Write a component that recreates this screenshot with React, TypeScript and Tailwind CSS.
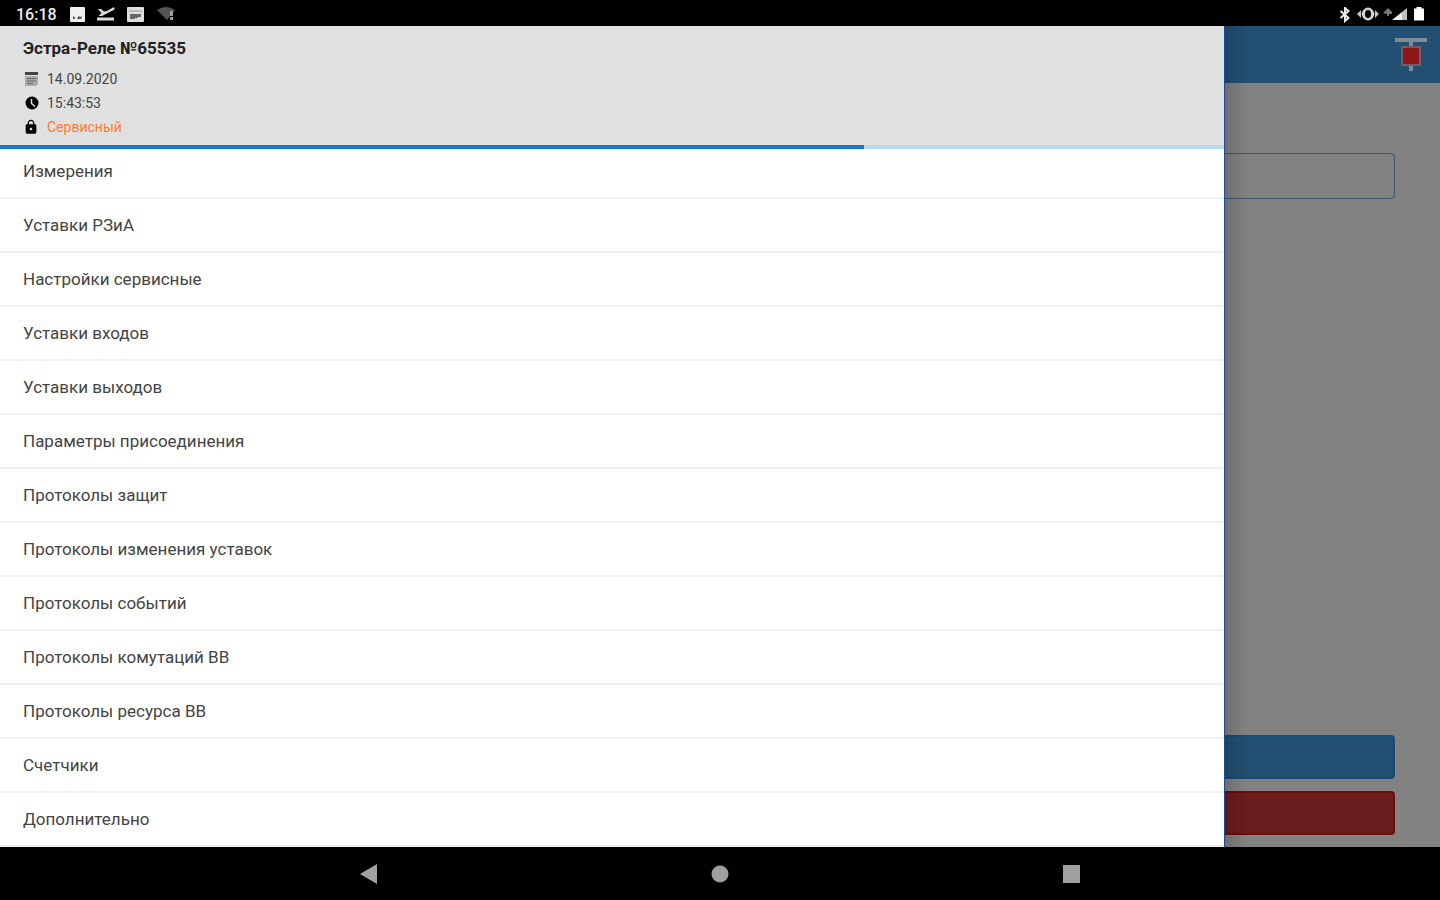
import React from 'react';
import { MdLock } from 'react-icons/md';

const menuItems = [
  'Измерения',
  'Уставки РЗиА',
  'Настройки сервисные',
  'Уставки входов',
  'Уставки выходов',
  'Параметры присоединения',
  'Протоколы защит',
  'Протоколы изменения уставок',
  'Протоколы событий',
  'Протоколы комутаций ВВ',
  'Протоколы ресурса ВВ',
  'Счетчики',
  'Дополнительно',
];

const StatusBar: React.FC = () => (
  <div className="flex h-[26px] items-center justify-between bg-black pl-4 pr-[15px] pt-1 text-[#ececec]">
    <div className="flex items-center gap-3">
      <span className="text-base font-medium leading-5">16:18</span>
      {/* Picture */}
      <svg className="h-4 w-4" viewBox="0 0 16 16">
        <rect x="1" y="0" width="15" height="15" rx="1" fill="#f0f0f0" />
        <path d="M4 12V9l2 1.500V12zM8 12l1.500-3 1.500 1 1.500-1v3z" fill="#555" />
      </svg>
      {/* Flight */}
      <svg className="h-4 w-[18px]" viewBox="0 0 18 16" fill="#dcdcdc">
        <path d="M0 10.500h17v3H0z" />
        <path d="M1 2l3 0 3 2.500 3-.5 6-3.500h1.500v2L5 9l-3.500 0 3-3z" />
      </svg>
      {/* Calendar */}
      <svg className="h-4 w-[18px]" viewBox="0 0 18 16">
        <rect x="0" y="0" width="17" height="15" rx="1" fill="#dedede" />
        <path d="M2 3.500h13v1H2z" fill="#999" />
        <path d="M3 7h5v5H3zM8 7h6v3h-3v1H8z" fill="#666" />
      </svg>
      {/* Wi-Fi */}
      <svg className="h-4 w-[18px]" viewBox="0 0 18 16">
        <path d="M0 3Q9-3 18 3L10 13z" fill="#555" />
        <path d="M13 4h3v5h-3zM13 10h3v3h-3z" fill="#a0a0a0" />
      </svg>
    </div>
    <div className="flex items-center gap-1">
      {/* Bluetooth */}
      <svg className="h-4 w-4" viewBox="0 0 16 16" fill="none" stroke="currentColor" strokeWidth="2">
        <path d="M3.500 4l8 7L8 14V1l3.500 3-8 7" />
      </svg>
      <svg className="h-4 w-[22px]" viewBox="0 0 22 16">
        <path d="M0 7l4-4v8zM22 7l-4-4v8z" fill="#c4c4c4" />
        <path d="M11 .5Q16 1 17.500 7 16 13 11 13.500 6 13 4.500 7 6 1 11 .5z" fill="#d4d4d4" />
        <ellipse cx="11" cy="7" rx="3" ry="4" fill="#000" />
      </svg>
      <svg className="h-4 w-[26px]" viewBox="0 0 26 16">
        <path d="M0 6l5-5 4 4v2H6v2H4V7z" fill="#777" />
        <path d="M9 13L19 5v8z" fill="#f0f0f0" />
        <path d="M19 5l5-4v12h-5z" fill="#bdbdbd" />
      </svg>
      <svg className="h-4 w-3" viewBox="0 0 12 16" fill="#fff">
        <path d="M3.500 0h5v1.500H11V13.500H1V1.500h2.500z" />
      </svg>
    </div>
  </div>
);

// Page that stays dimmed while the drawer is open
const DimmedPage: React.FC = () => (
  <div className="flex flex-col bg-[#828282] [grid-area:1/1]">
    <header className="flex h-[57px] items-center justify-end bg-[#234f73] pr-[13px]">
      <button type="button" aria-label="Состояние выключателя">
        <svg className="h-9 w-8" viewBox="0 0 32 36">
          <path d="M0 1h32v4H0z" fill="#7f8b95" />
          <path d="M14 5h4v29h-4z" fill="#7f8b95" />
          <rect x="6" y="9" width="20" height="20" fill="#6d5e6c" />
          <rect x="8" y="11" width="16" height="16" fill="#8f1616" />
        </svg>
      </button>
    </header>
    <div className="flex flex-1 flex-col px-[45px] pb-3 pt-[70px]">
      <input
        type="text"
        aria-label="Устройство"
        className="h-[46px] w-full rounded border border-[#3b5378] bg-transparent px-3"
      />
      <div className="mt-auto flex flex-col gap-3">
        <button type="button" aria-label="Подключить" className="h-11 rounded border-2 border-[#184b75] bg-[#234f73]" />
        <button type="button" aria-label="Отключить" className="h-11 rounded border-2 border-[#6c0c0f] bg-[#6b1d1d]" />
      </div>
    </div>
  </div>
);

const DrawerHeader: React.FC = () => (
  <div className="relative h-[119px] bg-[#e0e0e0] px-[23px] pt-3 text-sm text-[#444]">
    <h1 className="text-[17px] font-bold leading-5 text-[#222]">Эстра-Реле №65535</h1>
    <ul className="mt-[9px]">
      <li className="flex h-6 items-center gap-2">
        <svg className="h-4 w-4" viewBox="0 0 16 16">
          <path d="M2 1h13v3H2z" fill="#444" />
          <path d="M2 5h13v8l-2 2H2z" fill="#aaa" />
          <path d="M4 7.500h9M4 10h9M4 12.500h6" stroke="#666" />
        </svg>
        14.09.2020
      </li>
      <li className="flex h-6 items-center gap-2">
        <svg className="h-4 w-4" viewBox="0 0 16 16">
          <circle cx="9" cy="8" r="6.500" fill="#000" />
          <path d="M8.500 4v4.500l3.500 3" fill="none" stroke="#e0e0e0" strokeWidth="1.500" />
        </svg>
        15:43:53
      </li>
      <li className="flex h-6 items-center gap-2">
        <MdLock className="h-4 w-4 text-black" />
        <span className="text-[#ff7a2e]">Сервисный</span>
      </li>
    </ul>
    {/* Loading progress, hangs over the first menu row */}
    <div className="absolute inset-x-0 top-full h-1 bg-[#b9d8f1]">
      <div className="h-full bg-[#1976cb]" style={{ width: `${(12 / 17) * 100}%` }} />
    </div>
  </div>
);

const Drawer: React.FC = () => (
  <aside className="relative w-[85%] bg-white [grid-area:1/1]">
    <DrawerHeader />
    <nav>
      <ul>
        {menuItems.map((item) => (
          <li key={item}>
            <button
              type="button"
              className="flex h-[54px] w-full items-center border-b-2 border-[#f0f0f0] px-[23px] pt-0.5 text-left text-[17px] text-[#444]"
            >
              {item}
            </button>
          </li>
        ))}
      </ul>
    </nav>
    {/* Edge line and shadow */}
    <div className="absolute inset-y-0 left-full w-6 border-l border-[#1d4a98] bg-gradient-to-r from-black/15 to-transparent" />
  </aside>
);

const NavigationBar: React.FC = () => (
  <div className="flex h-[53px] items-center justify-center gap-[333px] bg-black text-[#a0a0a0]">
    <button type="button" aria-label="Назад">
      <svg className="h-5 w-[18px]" viewBox="0 0 18 20" fill="currentColor">
        <path d="M0 10L17 0v20z" />
      </svg>
    </button>
    <button type="button" aria-label="Домой">
      <svg className="h-5 w-[18px]" viewBox="0 0 18 20" fill="currentColor">
        <circle cx="9" cy="10" r="8.500" />
      </svg>
    </button>
    <button type="button" aria-label="Недавние">
      <svg className="h-5 w-[18px]" viewBox="0 0 18 20" fill="currentColor">
        <path d="M1 1h17v18H1z" />
      </svg>
    </button>
  </div>
);

const App: React.FC = () => {
  return (
    <div className="flex min-h-screen flex-col bg-black font-['Roboto','Noto_Sans',sans-serif]">
      <StatusBar />
      <main className="grid flex-1">
        <DimmedPage />
        <Drawer />
      </main>
      <NavigationBar />
    </div>
  );
};

export default App;
